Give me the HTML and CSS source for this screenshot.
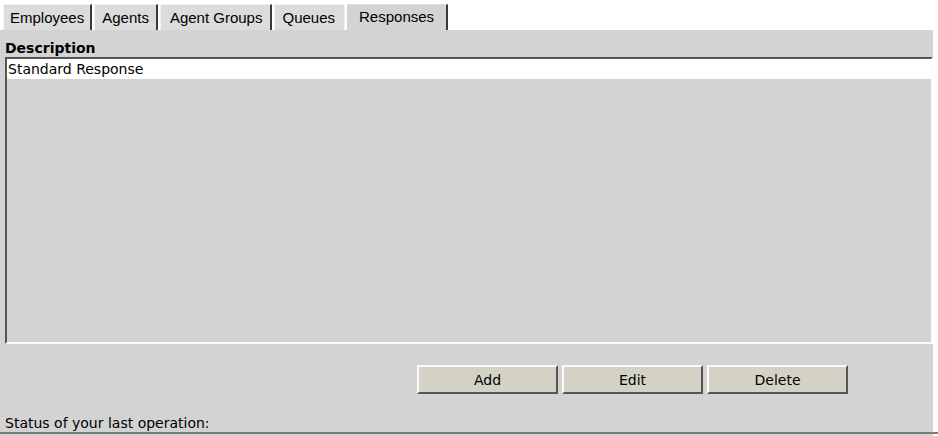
FILE: index.html
```html
<!DOCTYPE html>
<html>
<head>
    <meta charset="UTF-8">
    <title>Responses</title>
    <link rel="stylesheet" href="styles.css">
</head>
<body>

<div id="content">
    <div class="tabs">
        <span class="tab first">Employees</span>
        <span class="tab">Agents</span>
        <span class="tab wide">Agent Groups</span>
        <span class="tab plain">Queues</span>
        <span class="tab selected">Responses</span>
    </div>
    <div class="panel">
        <div class="listLabel">Description</div>
        <div class="list">
            <div class="row">Standard Response</div>
        </div>
        <div class="actions">
            <button>Add</button>
            <button>Edit</button>
            <button>Delete</button>
        </div>
        <div class="status">Status of your last operation:</div>
    </div>
</div>

</body>
</html>
```

FILE: styles.css
```css
html {
    font-family: "DejaVu Sans", Tahoma, sans-serif;
    font-size: 14px;
}

body {
    margin: 0;
    background-color: #fff;
}

.tabs {
    display: flex;
    align-items: flex-end;
    gap: 2px;
    padding: 4px 0 0 3px;
    height: 30px;
    box-sizing: border-box;
}

.tab {
    font-family: "Liberation Sans", Arial, sans-serif;
    font-size: 15px;
    height: 26px;
    box-sizing: border-box;
    padding: 4px 7px 0 7px;
    background-color: #dcdcdc;
    border-top: 1px solid #f2f2f2;
    border-left: 1px solid #f2f2f2;
    border-right: 2px solid #3a3a3a;
}

.tab.first {
    padding: 4px 6px 0 6px;
}

.tab.wide {
    padding: 4px 8px 0 9px;
}

.tab.plain {
    border-right: 1px solid #f2f2f2;
    padding-right: 9px;
}

.tab.selected {
    background-color: #d3d3d3;
    padding: 3px 12px 0 12px;
    border-top: 1px solid #e0e0e0;
    border-left: none;
}

.panel {
    background-color: #d3d3d3;
    margin-right: 5px;
    padding: 9px 0 2px 5px;
}

.listLabel {
    font-weight: bold;
    line-height: 18px;
}

.list {
    height: 283px;
    border-top: 2px solid #555;
    border-left: 2px solid #555;
    border-bottom: 2px solid #fafafa;
    border-right: 2px solid #fafafa;
}

.row {
    background-color: #fff;
    padding: 0 1px;
    height: 20px;
    line-height: 20px;
}

.actions {
    display: flex;
    gap: 4px;
    padding: 21px 0 0 412px;
}

.actions button {
    width: 141px;
    height: 29px;
    font-family: "DejaVu Sans", Tahoma, sans-serif;
    font-size: 14px;
    color: #000;
    background-color: #d4d2c5;
    border-top: 2px solid #fafafa;
    border-left: 2px solid #fafafa;
    border-right: 2px solid #555;
    border-bottom: 2px solid #555;
}

.status {
    margin-top: 20px;
    line-height: 18px;
    border-bottom: 2px solid #7a7a7a;
    margin-left: -5px;
    margin-right: -5px;
    padding-left: 5px;
}
```
